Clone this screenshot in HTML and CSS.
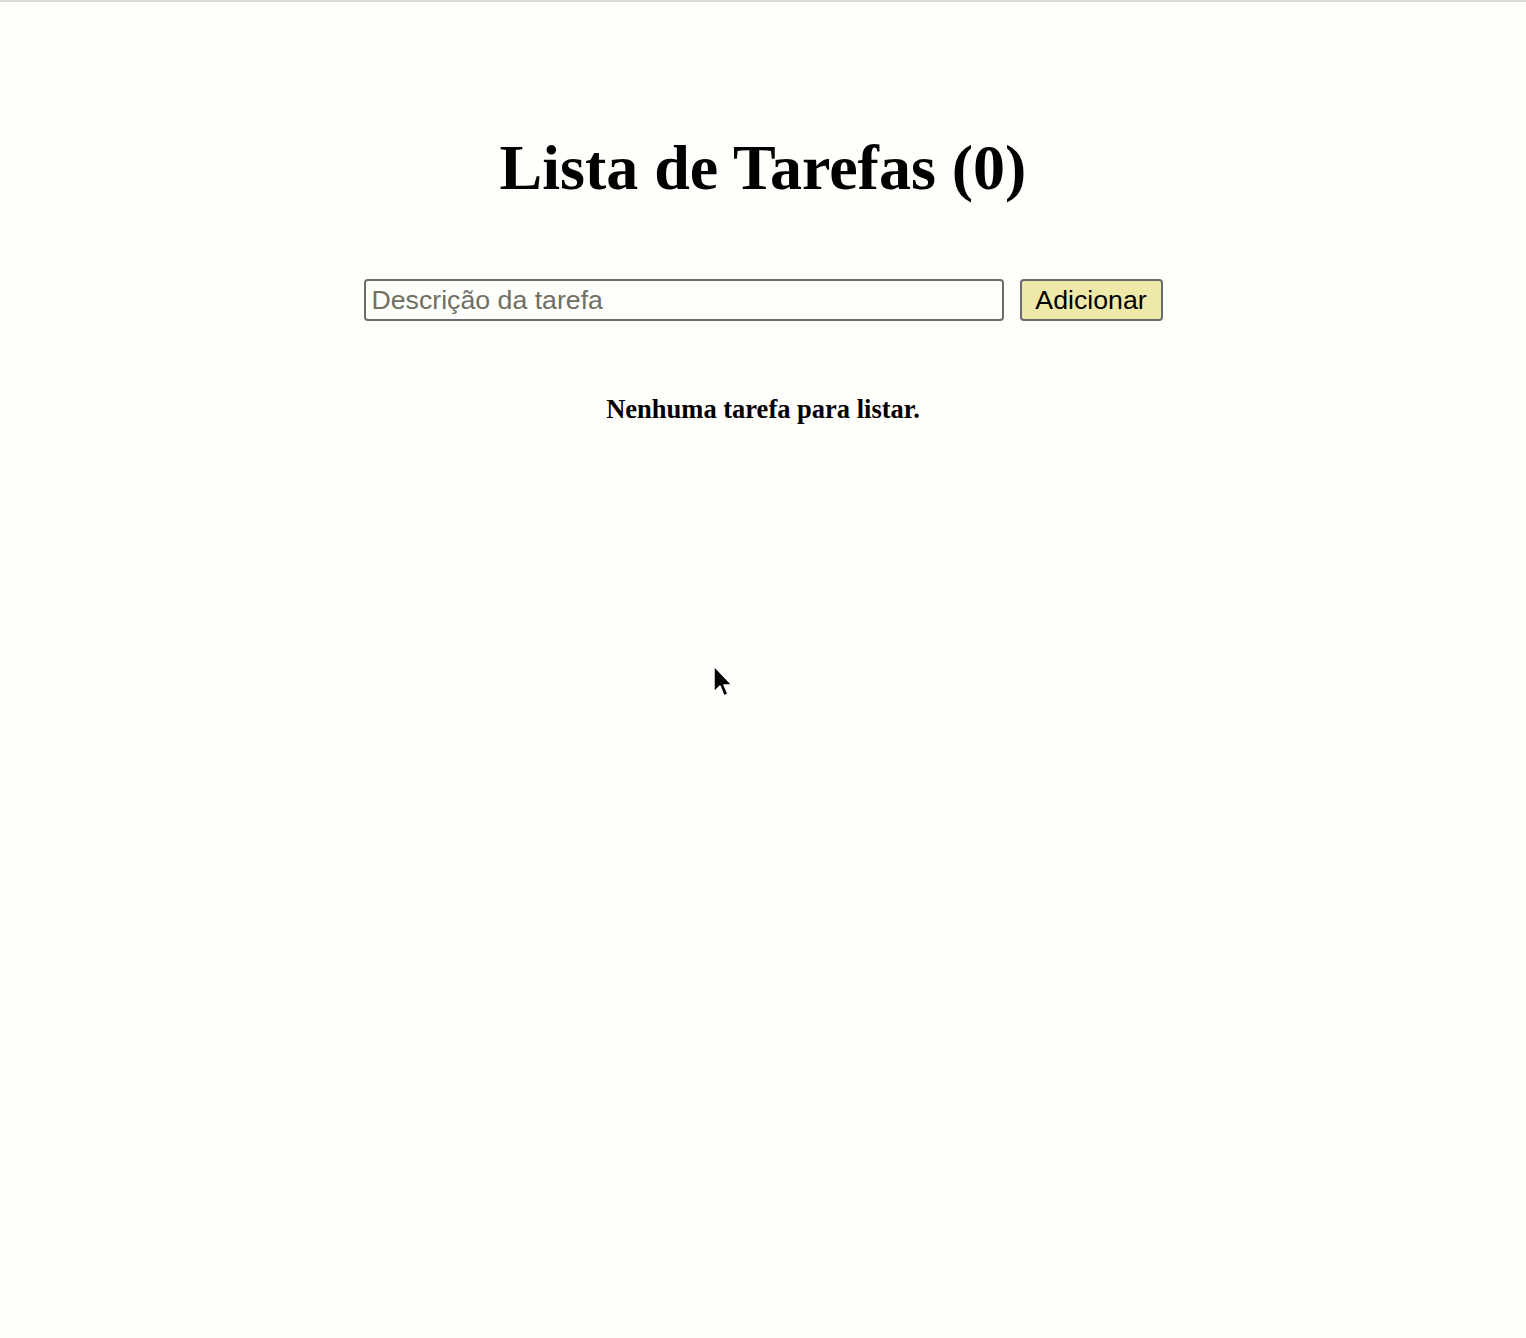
FILE: index.html
```html
<!DOCTYPE html>
<html lang="pt">
<head>
<meta charset="utf-8">
<title>Lista de Tarefas</title>
<link rel="stylesheet" href="styles.css">
</head>
<body>
<div class="topline"></div>
<main class="app">
  <h1 class="title">Lista de Tarefas (0)</h1>
  <form class="add-form" onsubmit="return false">
    <input class="task-input" type="text" placeholder="Descrição da tarefa">
    <button class="add-btn" type="submit">Adicionar</button>
  </form>
  <p class="empty">Nenhuma tarefa para listar.</p>
</main>
<svg class="cursor" width="22" height="36" viewBox="0 0 22 36">
  <path d="M1 1 L1 27 L7 21 L11 31 L15 29 L11 20 L19 20 Z" fill="#000" stroke="#fff" stroke-width="1.5" stroke-linejoin="round"/>
</svg>
</body>
</html>
```

FILE: styles.css
```css
html, body {
  margin: 0;
  padding: 0;
  background: #fefefa;
}
body {
  font-family: "Liberation Serif", "Times New Roman", serif;
  color: #000;
  min-height: 1338px;
  position: relative;
}
.topline {
  height: 2px;
  background: #d9d9d2;
}
.app {
  display: flex;
  flex-direction: column;
  align-items: center;
}
.title {
  margin: 126px 0 0;
  font-size: 64px;
  font-weight: bold;
  line-height: 80px;
}
.add-form {
  display: flex;
  gap: 16px;
  margin-top: 71px;
}
.task-input {
  box-sizing: border-box;
  width: 640px;
  height: 42px;
  border: 2px solid #6b6b6b;
  border-radius: 4px;
  background: #fefefa;
  font-family: "Liberation Sans", Arial, sans-serif;
  font-size: 26.7px;
  padding: 0 6px;
  color: #000;
}
.task-input::placeholder {
  color: #6f6f62;
}
.add-btn {
  box-sizing: border-box;
  width: 143px;
  height: 42px;
  border: 2px solid #6b6b6b;
  border-radius: 4px;
  background: #eee9a8;
  font-family: "Liberation Sans", Arial, sans-serif;
  font-size: 26.7px;
  color: #000;
  padding: 0;
}
.empty {
  margin: 72px 0 0;
  font-size: 26.5px;
  font-weight: bold;
  line-height: 32px;
}
.cursor {
  position: absolute;
  left: 713px;
  top: 665px;
}
```
